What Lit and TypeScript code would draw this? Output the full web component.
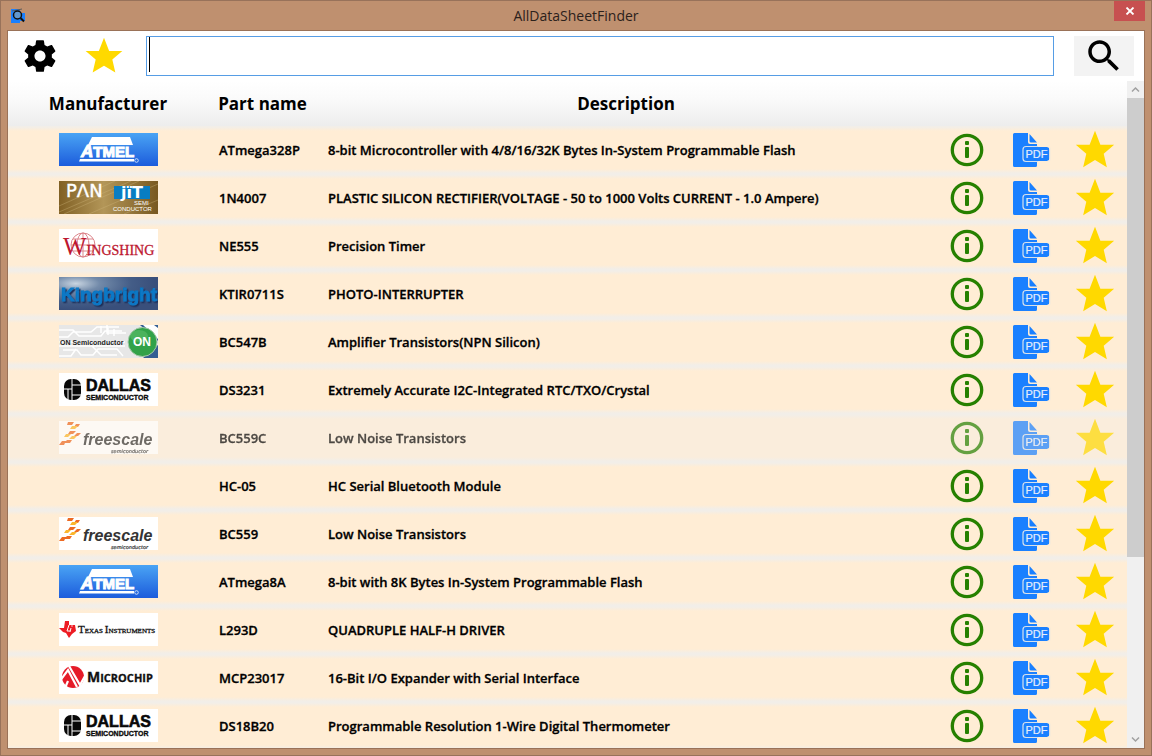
import { LitElement, html, svg, css, nothing } from "lit";
import { customElement, state } from "lit/decorators.js";

type Part = { maker: string; name: string; description: string; faded?: boolean };

const PARTS: Part[] = [
  { maker: "atmel", name: "ATmega328P", description: "8-bit Microcontroller with 4/8/16/32K Bytes In-System Programmable Flash" },
  { maker: "panjit", name: "1N4007", description: "PLASTIC SILICON RECTIFIER(VOLTAGE - 50 to 1000 Volts CURRENT - 1.0 Ampere)" },
  { maker: "wingshing", name: "NE555", description: "Precision Timer" },
  { maker: "kingbright", name: "KTIR0711S", description: "PHOTO-INTERRUPTER" },
  { maker: "on", name: "BC547B", description: "Amplifier Transistors(NPN Silicon)" },
  { maker: "dallas", name: "DS3231", description: "Extremely Accurate I2C-Integrated RTC/TXO/Crystal" },
  { maker: "freescale", name: "BC559C", description: "Low Noise Transistors", faded: true },
  { maker: "", name: "HC-05", description: "HC Serial Bluetooth Module" },
  { maker: "freescale", name: "BC559", description: "Low Noise Transistors" },
  { maker: "atmel", name: "ATmega8A", description: "8-bit with 8K Bytes In-System Programmable Flash" },
  { maker: "ti", name: "L293D", description: "QUADRUPLE HALF-H DRIVER" },
  { maker: "microchip", name: "MCP23017", description: "16-Bit I/O Expander with Serial Interface" },
  { maker: "dallas", name: "DS18B20", description: "Programmable Resolution 1-Wire Digital Thermometer" },
];

const LOGOS: Record<string, unknown> = {
  atmel: svg`
    <defs><linearGradient id="a" x1="0" y1="0" x2="0" y2="1"><stop offset="0" stop-color="#4aa4f4"/><stop offset="1" stop-color="#1c5cdc"/></linearGradient></defs>
    <rect width="99" height="33" fill="url(#a)"/>
    <path d="M33 4H71L74 12H29Z" fill="#fff"/>
    <text x="22" y="24" font-family="Liberation Sans" font-weight="700" font-style="italic" font-size="17" fill="#fff" stroke="#fff">A<tspan font-style="normal" font-size="15">TMEL</tspan></text>
    <path d="M21 26H75V28.500H20Z" fill="#fff"/>
    <circle cx="77.500" cy="27.500" r="1.800" fill="none" stroke="#fff" stroke-width=".7"/>`,
  panjit: svg`
    <defs><linearGradient id="p"><stop offset="0" stop-color="#806024"/><stop offset=".45" stop-color="#b39658"/><stop offset="1" stop-color="#785820"/></linearGradient></defs>
    <rect width="99" height="33" fill="url(#p)"/>
    <path d="M0 25L56 0M0 31L72 0M5 33L80 0M30 33L99 3M65 33L99 19" stroke="#d1b87d" stroke-width="1" opacity=".35"/>
    <rect x="55" y="5" width="36" height="13" fill="#087dc3"/>
    <g fill="#fff"><text x="7" y="16" font-family="DejaVu Sans" font-size="18" stroke="#fff" stroke-width=".4">PΛN</text>
    <text x="62" y="17" font-family="DejaVu Sans" font-size="16" font-weight="700">jïT</text>
    <g font-family="Liberation Sans" font-size="6"><text x="75" y="24">SEMI</text><text x="54" y="30">CONDUCTOR</text></g></g>`,
  wingshing: svg`
    <rect width="99" height="33" fill="#fff"/>
    <g fill="none" stroke="#dd858b" stroke-width="1"><circle cx="24" cy="16" r="12"/><ellipse cx="24" cy="16" rx="6" ry="12"/><path d="M12 16H36M14 10H34M14 22H34M24 4V28"/></g>
    <text x="4" y="26" fill="#bd1730" font-family="Liberation Serif" font-size="25">W<tspan font-size="14" stroke="#bd1730" stroke-width=".3">INGSHING</tspan></text>`,
  kingbright: svg`
    <defs><radialGradient id="k" cx=".17" cy=".2" r=".8"><stop offset="0" stop-color="#c9d5e1"/><stop offset=".3" stop-color="#738baa"/><stop offset=".7" stop-color="#445d87"/><stop offset="1" stop-color="#394f7b"/></radialGradient>
    <filter id="ks"><feDropShadow dx="1.500" dy="1.500" stdDeviation=".6" flood-color="#1c2f58"/></filter></defs>
    <rect width="99" height="33" fill="url(#k)"/>
    <text x="2" y="24" font-family="Liberation Sans" font-weight="700" font-size="19" fill="#0878c6" stroke="#0878c6" stroke-width=".8" filter="url(#ks)">Kingbright</text>`,
  on: svg`
    <rect width="99" height="33" fill="#e7e7e7"/>
    <path d="M0 5H14L20 11H42L46 6H63M0 12H9L14 7H32L38 2H60M4 25H18L22 30H34L39 24H58L64 31M0 31H12L17 24M42 8V1M49 10V3M55 11V4M32 20L42 30H58M48 0V8H67M0 17H66M0 21H66" fill="none" stroke="#fff" stroke-width="1.500"/>
    <path d="M81 0H99V16ZM99 20V33H84Z" fill="#345e93"/>
    <path d="M84 0H95L99 3V14Z" fill="#fff"/>
    <circle cx="83.500" cy="17" r="14.500" fill="#32a249" stroke="#a7c8aa"/>
    <ellipse cx="80" cy="11" rx="9" ry="6" fill="#6bc876" opacity=".45"/>
    <text x="74" y="21" font-family="Liberation Sans" font-weight="700" font-size="12" fill="#fff">ON</text>
    <text x="1" y="20" font-family="Liberation Sans" font-weight="700" font-size="7" fill="#222">ON Semiconductor</text>`,
  dallas: svg`
    <rect width="99" height="33" fill="#fff"/>
    <rect x="5" y="6" width="17" height="21" rx="7" fill="#080808"/>
    <path d="M5 16H13M13 5V28M13 12H22M13 22H22M9 16V27" stroke="#fff" stroke-width="1"/>
    <g font-family="Liberation Sans" font-weight="700" fill="#080808"><text x="27" y="18" font-size="16" stroke="#080808" stroke-width=".6">DALLAS</text><text x="27" y="27" font-size="7" stroke="#080808" stroke-width=".3">SEMICONDUCTOR</text></g>`,
  freescale: svg`
    <rect width="99" height="33" fill="#fff"/>
    <g><path d="M9 1H15L13 4H8ZM11 10H17L14 13H9ZM8 19H13L11 22H5ZM3 20H7L5 24H0ZM18 12H22L19 15H15ZM17 3H21L19 6H15Z" fill="#ed6a23"/><path d="M13 5H19L16 8H11ZM13 15H18L15 18H10ZM7 13H12L9 16H5Z" fill="#fbb62d"/></g>
    <g font-family="Liberation Sans" font-style="italic" fill="#343434"><text x="24" y="24" font-size="16" font-weight="700">freescale</text><text x="52" y="32" font-size="5" font-family="DejaVu Sans" stroke="#343434" stroke-width=".2">semiconductor</text></g>`,
  ti: svg`
    <rect width="99" height="33" fill="#fff"/>
    <path d="M6 8H10V12H16L17 18L13 21L10 25L7 20L4 19L0 15H5Z" fill="#ed1c24"/>
    <path d="M10 12L8 18H11M12 15L11 19" stroke="#fff" fill="none"/><circle cx="13" cy="13" r=".7" fill="#fff"/>
    <text x="19" y="20" font-size="11" font-family="Liberation Serif" fill="#111" stroke="#111" stroke-width=".3">T<tspan font-size="7">EXAS </tspan>I<tspan font-size="7">NSTRUMENTS</tspan></text>`,
  microchip: svg`
    <rect width="99" height="33" fill="#fff"/>
    <circle cx="14" cy="16" r="11" fill="#e51b28"/>
    <path d="M0 21L9 9L18 26M10 5L21 24L26 15M6 27L9 20" fill="none" stroke="#fff" stroke-width="2.200"/>
    <text x="28" y="21" font-family="Open Sans" font-weight="700" font-size="14" fill="#111" stroke="#111" stroke-width=".3">M<tspan font-size="11">ICROCHIP</tspan></text>`,
};

const NAMES: Record<string, string> = {
  atmel: "Atmel", panjit: "Pan Jit Semiconductor", wingshing: "Wing Shing", kingbright: "Kingbright", on: "ON Semiconductor",
  dallas: "Dallas Semiconductor", freescale: "Freescale Semiconductor", ti: "Texas Instruments", microchip: "Microchip",
};

const star = (size: number) => html`<svg width=${size} height=${size} viewBox="0 0 24 24" aria-hidden="true"><path fill="#ffd900" d="M12 17.270L18.180 21l-1.640-7.030L22 9.240h-7.190L12 2 9.190 9.240H2l5.460 4.730L5.820 21z"/></svg>`;

const info = html`<svg width="40" height="40" viewBox="0 0 40 40" aria-hidden="true">
  <circle cx="20" cy="20" r="14.700" fill="none" stroke="#268000" stroke-width="3.300"/>
  <rect x="18" y="11" width="4" height="4" rx="1" fill="#268000"/><rect x="18" y="17" width="4" height="11" rx="1" fill="#268000"/></svg>`;

const pdf = html`<svg width="40" height="40" viewBox="0 0 40 40" aria-hidden="true">
  <path d="M3.500 3H17V12Q17 14 19 14H26V35.500Q26 37 24.500 37H3.500Q2 37 2 35.500V4.500Q2 3 3.500 3ZM18.500 4L26 12.500H20Q18.500 12.500 18.500 11Z" fill="#1a80ff"/>
  <rect x="12" y="16.500" width="27" height="15" rx="3" fill="#1a80ff" stroke="#d7e1eb" stroke-width="1.200"/>
  <path d="M27 16.300H36Q39 16.300 39 19V29Q39 31.700 36 31.700H27" fill="none" stroke="#ffedd5" stroke-width="1.400"/>
  <text x="14.500" y="28" font-family="Liberation Sans" font-size="11" fill="#e6eefb" stroke="#e6eefb" stroke-width=".2">PDF</text></svg>`;

@customElement("app-root")
export class AppRoot extends LitElement {
  @state() private query = "";

  static styles = css`
    :host { display: block; font-family: "Open Sans", "Noto Sans", sans-serif; color: #000; }
    * { box-sizing: border-box; }
    button { border: 0; padding: 0; background: none; display: grid; place-items: center; place-content: center; font: inherit; }
    svg { display: block; }
    .window { height: 100vh; display: flex; flex-direction: column; background: #bf906f; border: 1px solid #98725a; padding: 0 6px 6px; }
    .titlebar { height: 29px; flex: none; display: grid; grid-template-columns: 1fr auto 1fr; }
    .app-icon { margin: 7px 0 0 3px; }
    .title { margin: 0; font-size: 14px; font-weight: 400; line-height: 29px; color: #2b211b; }
    .close { justify-self: end; width: 31px; height: 20px; background: #c75050; }
    .client { flex: 1; min-height: 0; display: flex; flex-direction: column; background: #fff; border: 1px solid #9a7258; }
    .toolbar { height: 50px; flex: none; display: flex; align-items: center; padding: 0 10px 0 0; }
    .tool { width: 64px; height: 50px; }
    .query { flex: 1; min-width: 0; height: 40px; margin: 0 20px 0 10px; padding: 0 4px; border: 1px solid #569de5; outline: 0; font: inherit; font-size: 24px;
      background: linear-gradient(#000, #000) 2px 0 / 1px 35px no-repeat #fff; caret-color: transparent; }
    .search { width: 60px; height: 40px; background: #f3f3f3; }
    .body { flex: 1; min-height: 0; display: flex; }
    .list { flex: 1; min-width: 0; overflow: hidden; }
    table { width: 100%; table-layout: fixed; border-collapse: collapse; }
    th { height: 45px; padding: 0; font-size: 17px; font-weight: 700; line-height: 24px; text-align: center; }
    thead tr { background: linear-gradient(#fff, #fbfbfb 35%, #ededed); }
    .col-maker { width: 200px; }
    .col-part { width: 109px; }
    .col-action { width: 64px; }
    tbody tr { background: linear-gradient(#f2eee8 1px, #ffedd5 5px, #ffedd5 43px, #f2eee8 47px); }
    td { height: 48px; padding: 0; font-size: 13px; line-height: 18px; }
    .text { padding-left: 11px; font-weight: 600; white-space: nowrap; -webkit-text-stroke: 0.3px currentColor; }
    .logo { display: block; margin: 0 auto 1px; overflow: hidden; }
    .action { width: 100%; height: 48px; }
    .favourite { padding-bottom: 1px; }
    .faded { background: linear-gradient(#f2eee8 1px, #faeddc 5px, #faeddc 43px, #f2eee8 47px); }
    .faded .text, .faded .logo, .faded .action { opacity: .7; }
    .scrollbar { width: 17px; flex: none; display: flex; flex-direction: column; background: #f0f0f0; }
    .arrow { height: 17px; flex: none; }
    .track { flex: 1; }
    .thumb { height: 72.5%; background: #cdcdcd; }
  `;

  private onInput(e: Event) {
    this.query = (e.target as HTMLInputElement).value;
  }

  private row(p: Part) {
    return html`<tr class=${p.faded ? "faded" : "part"}>
      <td>${p.maker ? html`<svg class="logo" width="99" height="33" viewBox="0 0 99 33" role="img" aria-label=${NAMES[p.maker]}>${LOGOS[p.maker]}</svg>` : nothing}</td>
      <td class="text">${p.name}</td>
      <td class="text">${p.description}</td>
      <td><button class="action" aria-label="Details">${info}</button></td>
      <td><button class="action" aria-label="Open PDF">${pdf}</button></td>
      <td><button class="action favourite" aria-label="Favourite">${star(46)}</button></td>
    </tr>`;
  }

  render() {
    return html`<div class="window">
      <header class="titlebar">
        <svg class="app-icon" width="16" height="16" viewBox="0 0 16 16" aria-hidden="true">
          <path d="M1 1H9L11 5H15V13H10V15H1Z" fill="#1a80ff"/><path d="M2 3L12 1" stroke="#5b5b5b"/>
          <circle cx="7.500" cy="7" r="4" fill="#6297ce" stroke="#111" stroke-width="1.500"/><path d="M10.500 10L14 13.500" stroke="#111" stroke-width="2"/></svg>
        <h1 class="title">AllDataSheetFinder</h1>
        <button class="close" aria-label="Close"><svg width="10" height="8" viewBox="0 0 10 8"><path d="M1.500 .5L8.500 7.500M8.500 .5L1.500 7.500" stroke="#fff" stroke-width="1.800"/></svg></button>
      </header>
      <main class="client">
        <div class="toolbar">
          <button class="tool" aria-label="Settings"><svg width="38" height="38" viewBox="0 0 24 24"><path d="M19.430 12.980c.040-.320.070-.640.070-.980s-.030-.660-.070-.980l2.110-1.650c.190-.150.240-.420.120-.640l-2-3.460c-.120-.220-.390-.300-.610-.220l-2.490 1c-.520-.400-1.080-.730-1.690-.980l-.380-2.650C14.460 2.180 14.250 2 14 2h-4c-.250 0-.460.180-.490.420l-.380 2.650c-.610.250-1.170.590-1.690.980l-2.490-1c-.230-.090-.490 0-.610.220l-2 3.460c-.130.220-.070.490.120.640l2.110 1.650c-.040.320-.070.650-.070.980s.030.660.070.980l-2.110 1.650c-.190.150-.240.420-.120.640l2 3.460c.120.220.390.300.610.220l2.490-1c.520.400 1.080.730 1.690.980l.380 2.650c.030.240.240.420.490.420h4c.250 0 .460-.180.490-.420l.380-2.650c.610-.250 1.170-.590 1.690-.980l2.490 1c.230.090.490 0 .610-.220l2-3.460c.120-.220.070-.490-.120-.640l-2.110-1.650zM12 15.500c-1.930 0-3.500-1.570-3.500-3.500s1.570-3.500 3.500-3.500 3.500 1.570 3.500 3.500-1.570 3.500-3.500 3.500z"/></svg></button>
          <button class="tool" aria-label="Favourites">${star(44)}</button>
          <input class="query" type="text" aria-label="Search parts" .value=${this.query} @input=${this.onInput} />
          <button class="search" aria-label="Search"><svg width="42" height="42" viewBox="0 0 24 24"><path d="M15.500 14h-.790l-.280-.270C15.410 12.590 16 11.110 16 9.500 16 5.910 13.090 3 9.500 3S3 5.910 3 9.500 5.910 16 9.500 16c1.610 0 3.090-.590 4.230-1.570l.270.280v.790l5 4.990L20.490 19l-4.990-5zm-6 0C7.010 14 5 11.990 5 9.500S7.010 5 9.500 5 14 7.010 14 9.500 11.990 14 9.500 14z"/></svg></button>
        </div>
        <div class="body">
          <div class="list">
            <table>
              <colgroup><col class="col-maker" /><col class="col-part" /><col /><col class="col-action" /><col class="col-action" /><col class="col-action" /></colgroup>
              <thead><tr><th>Manufacturer</th><th>Part name</th><th>Description</th><th></th><th></th><th></th></tr></thead>
              <tbody>${PARTS.map((p) => this.row(p))}</tbody>
            </table>
          </div>
          <div class="scrollbar">
            <button class="arrow" aria-label="Scroll up"><svg width="9" height="7" viewBox="0 0 9 7"><path d="M1 5.500L4.500 2L8 5.500" fill="none" stroke="#a0a0a0" stroke-width="1.500"/></svg></button>
            <div class="track"><div class="thumb"></div></div>
            <button class="arrow" aria-label="Scroll down"><svg width="9" height="7" viewBox="0 0 9 7"><path d="M1 1.500L4.500 5L8 1.500" fill="none" stroke="#a0a0a0" stroke-width="1.500"/></svg></button>
          </div>
        </div>
      </main>
    </div>`;
  }
}
